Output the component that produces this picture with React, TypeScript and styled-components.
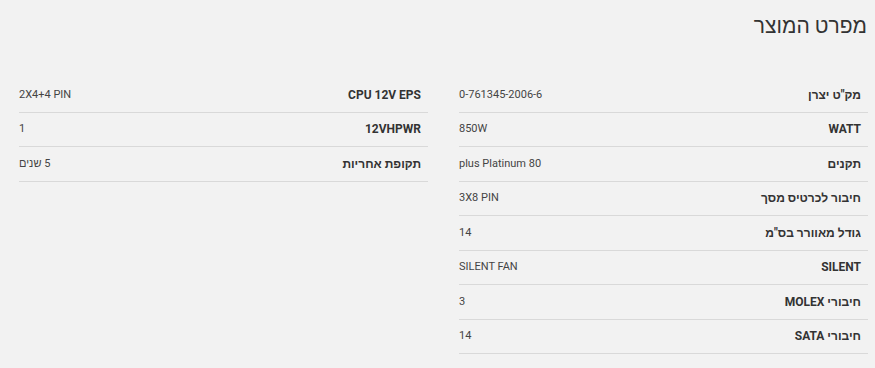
import React from "react";
import styled, { createGlobalStyle } from "styled-components";

const Global = createGlobalStyle`
  html, body { margin: 0; padding: 0; background: #f2f2f2; }
  body { font-family: Roboto, "Liberation Sans", "Open Sans", sans-serif; color: #333; }
`;

const Page = styled.div`
  direction: rtl;
  padding: 11px 7px 0 19px;
`;

const Title = styled.h2`
  margin: 0 0 37px 0;
  padding-right: 1px;
  font-size: 21px;
  font-weight: 300;
  line-height: 30px;
  color: #333;
`;

const Columns = styled.div`
  display: grid;
  grid-template-columns: 1fr 1fr;
  column-gap: 31px;
  align-items: start;
`;

const Table = styled.div`
  display: flex;
  flex-direction: column;
`;

const Row = styled.div`
  display: flex;
  justify-content: space-between;
  align-items: center;
  height: 33.5px;
  border-bottom: 1px solid #d9d9d9;
  padding-right: 7px;
`;

const Label = styled.span`
  font-size: 12px;
  font-weight: 700;
  color: #333;
`;

const Value = styled.span`
  font-size: 11px;
  font-weight: 400;
  color: #444;
  margin-top: -1px;
`;

const rightSpecs: [string, string][] = [
  ['מק"ט יצרן', "0-761345-2006-6"],
  ["WATT", "850W"],
  ["תקנים", "plus Platinum 80"],
  ["חיבור לכרטיס מסך", "3X8 PIN"],
  ['גודל מאוורר בס"מ', "14"],
  ["SILENT", "SILENT FAN"],
  ["חיבורי MOLEX", "3"],
  ["חיבורי SATA", "14"],
];

const leftSpecs: [string, string][] = [
  ["CPU 12V EPS", "2X4+4 PIN"],
  ["12VHPWR", "1"],
  ["תקופת אחריות", "5 שנים"],
];

const SpecTable = ({ items }: { items: [string, string][] }) => (
  <Table>
    {items.map(([l, v]) => (
      <Row key={l}>
        <Label>{l}</Label>
        <Value dir="auto">{v}</Value>
      </Row>
    ))}
  </Table>
);

export default function App() {
  return (
    <>
      <Global />
      <Page>
        <Title>מפרט המוצר</Title>
        <Columns>
          <SpecTable items={rightSpecs} />
          <SpecTable items={leftSpecs} />
        </Columns>
      </Page>
    </>
  );
}
